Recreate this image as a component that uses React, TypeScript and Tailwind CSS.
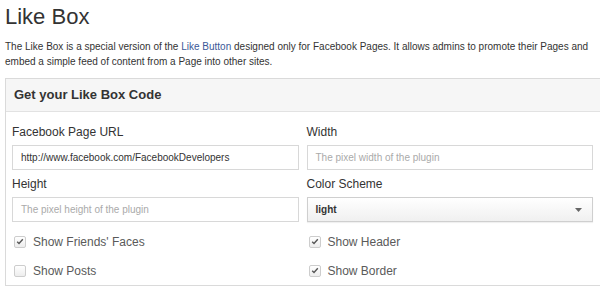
const Check = ({ on }: { on: boolean }) => (
  <span className="flex h-[12px] w-[12px] items-center justify-center rounded-[2px] border border-[#cdcdcd] bg-gradient-to-b from-white to-[#ededed]">
    {on && (
      <svg width="8" height="7" viewBox="0 0 8 7">
        <path d="M1.2 3.8 L3 5.5 L6.8 1.3" fill="none" stroke="#555" strokeWidth="1.4" />
      </svg>
    )}
  </span>
);

const Field = ({ label, children }: { label: string; children: React.ReactNode }) => (
  <div className="flex flex-col">
    <label className="mb-[5px] text-[12px] leading-[15px] text-[#333]">{label}</label>
    {children}
  </div>
);

const Input = ({ value, placeholder }: { value?: string; placeholder?: string }) => (
  <div className="flex h-[25px] items-center border border-[#d8d8d8] bg-white px-[8px] text-[10px]">
    {value ? (
      <span className="text-[#333]">{value}</span>
    ) : (
      <span className="text-[#aaa]">{placeholder}</span>
    )}
  </div>
);

const Option = ({ on, label }: { on: boolean; label: string }) => (
  <div className="flex h-[29px] items-center gap-[7px] pl-[2px]">
    <Check on={on} />
    <span className="text-[12px] text-[#5a5a5a]">{label}</span>
  </div>
);

export default function App() {
  return (
    <div className="h-[286px] w-[600px] overflow-hidden bg-white font-['Liberation_Sans',Arial,sans-serif] text-[#333]">
      <h1 className="pl-[5px] pt-[3px] text-[22px] leading-[28px] text-[#333]">Like Box</h1>
      <p className="mt-[8px] whitespace-nowrap pl-[5px] text-[10px] leading-[15px] text-[#333]">
        The Like Box is a special version of the <span className="text-[#3b5998]">Like Button</span> designed only for Facebook Pages. It allows admins to promote their Pages and
        <br />
        embed a simple feed of content from a Page into other sites.
      </p>
      <div className="ml-[5px] mt-[9px] w-[600px] border border-[#dadada]">
        <div className="flex h-[33px] items-center border-b border-[#e2e2e2] bg-[#f6f6f6] pl-[8px] text-[13px] font-bold text-[#333]">
          Get your Like Box Code
        </div>
        <div className="grid w-[587px] grid-cols-2 gap-x-[8px] gap-y-[7px] pl-[6px] pt-[13px]">
          <Field label="Facebook Page URL">
            <Input value="http://www.facebook.com/FacebookDevelopers" />
          </Field>
          <Field label="Width">
            <Input placeholder="The pixel width of the plugin" />
          </Field>
          <Field label="Height">
            <Input placeholder="The pixel height of the plugin" />
          </Field>
          <Field label="Color Scheme">
            <div className="flex h-[25px] items-center justify-between border border-[#cfcfcf] bg-gradient-to-b from-white to-[#f0f0f0] pl-[8px] pr-[10px] shadow-[0_1px_1px_rgba(0,0,0,0.06)]">
              <span className="text-[10px] font-bold text-[#333]">light</span>
              <svg width="7" height="4" viewBox="0 0 7 4">
                <path d="M0 0 H7 L3.5 4 Z" fill="#666" />
              </svg>
            </div>
          </Field>
        </div>
        <div className="mt-[5px] grid w-[587px] grid-cols-2 gap-x-[8px] pl-[6px]">
          <div>
            <Option on label="Show Friends' Faces" />
            <Option on={false} label="Show Posts" />
          </div>
          <div>
            <Option on label="Show Header" />
            <Option on label="Show Border" />
          </div>
        </div>
      </div>
    </div>
  );
}
